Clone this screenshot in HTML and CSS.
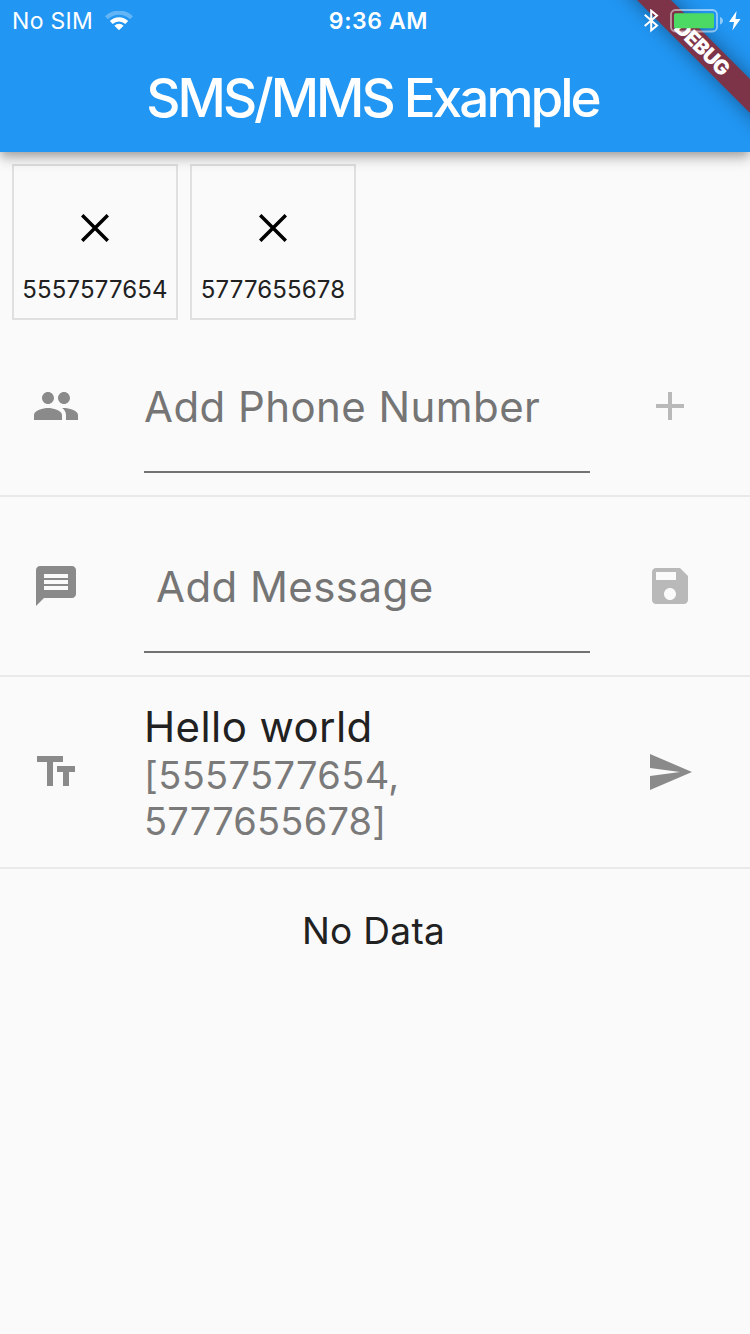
FILE: index.html
```html
<!DOCTYPE html>
<html lang="en">
<head>
<meta charset="utf-8">
<title>SMS/MMS Example</title>
<link rel="stylesheet" href="styles.css">
</head>
<body>
<header class="app-bar">
  <div class="ribbon-clip"><div class="ribbon"><span class="ribbon-text">DEBUG</span></div></div>
  <div class="status">
    <div class="status-left">
      <span class="carrier">No SIM</span>
      <svg class="wifi" width="28" height="20" viewBox="0 0 28 20">
        <path d="M0 5.300a19.8 19.8 0 0 1 28 0l-2.900 3a15.700 15.700 0 0 0-22.200 0z" fill="#fff" fill-opacity=".3"/>
        <path d="M4.800 10.100a13 13 0 0 1 18.400 0l-2.900 2.900a8.900 8.900 0 0 0-12.600 0z" fill="#fff"/>
        <path d="M9.400 14.700a6.500 6.500 0 0 1 9.200 0L14 19.200z" fill="#fff"/>
      </svg>
    </div>
    <span class="clock">9:36 AM</span>
    <div class="status-right">
      <svg width="16" height="24" viewBox="0 0 16 24" fill="none" stroke="#fff" stroke-width="2"><path d="M1.700 5.800 14 16.500 8.200 21.300V1.700L14 6.500 1.700 17.100"/></svg>
      <svg class="battery" width="54" height="24" viewBox="0 0 54 24">
        <rect x="1" y="1" width="46" height="21.5" rx="4.5" fill="none" stroke="#fff" stroke-opacity=".5" stroke-width="1.8"/>
        <rect x="4" y="4.250" width="40" height="15" rx="1.5" fill="#4cd964"/>
        <path d="M50 8c1.800.600 3 2 3 3.800S51.800 15 50 15.600z" fill="#fff" fill-opacity=".5"/>
      </svg>
      <svg class="bolt" width="12" height="20" viewBox="0 0 12 20"><path d="M7.600 0 0 11h5L3.400 19.500 11.500 8H6.500z" fill="#fff"/></svg>
    </div>
  </div>
  <h1 class="title"><span>SMS/MMS Example</span></h1>
</header>

<main>
  <section class="chips">
    <div class="chip">
      <svg width="28" height="28" viewBox="0 0 28 28"><path d="M1.200 1.200 26.800 26.800M26.800 1.200 1.200 26.800" stroke="#000" stroke-width="3.500"/></svg>
      <span class="chip-label">5557577654</span>
    </div>
    <div class="chip">
      <svg width="28" height="28" viewBox="0 0 28 28"><path d="M1.200 1.200 26.800 26.800M26.800 1.200 1.200 26.800" stroke="#000" stroke-width="3.500"/></svg>
      <span class="chip-label">5777655678</span>
    </div>
  </section>

  <section class="row">
    <svg class="icon lead" viewBox="0 0 24 24"><path d="M16 11c1.660 0 2.990-1.340 2.990-3S17.660 5 16 5s-3 1.340-3 3 1.340 3 3 3zm-8 0c1.660 0 2.990-1.340 2.990-3S9.660 5 8 5 5 6.340 5 8s1.340 3 3 3zm0 2c-2.330 0-7 1.170-7 3.500V19h14v-2.500C15 14.170 10.330 13 8 13zm8 0c-.290 0-.620.020-.970.050C16.190 13.890 17 15.020 17 16.500V19h6v-2.500c0-2.330-4.670-3.500-7-3.500z"/></svg>
    <div class="field"><span class="hint hint-phone">Add Phone Number</span></div>
    <svg class="icon trail off" viewBox="0 0 24 24"><path d="M19 13h-6v6h-2v-6H5v-2h6V5h2v6h6z"/></svg>
  </section>

  <section class="row">
    <svg class="icon lead" viewBox="0 0 24 24"><path d="M20 2H4c-1.100 0-1.990.900-1.990 2L2 22l4-4h14c1.100 0 2-.900 2-2V4c0-1.100-.900-2-2-2zm-2 12H6v-2h12v2zm0-3H6V9h12v2zm0-3H6V6h12v2z"/></svg>
    <div class="field"><span class="hint hint-message">Add Message</span></div>
    <svg class="icon trail off" viewBox="0 0 24 24"><path d="M17 3H5c-1.110 0-2 .900-2 2v14c0 1.100.890 2 2 2h14c1.100 0 2-.900 2-2V7l-4-4zm-5 16c-1.660 0-3-1.340-3-3s1.340-3 3-3 3 1.340 3 3-1.340 3-3 3zm3-10H5V5h10v4z"/></svg>
  </section>

  <section class="row row-tall">
    <svg class="icon lead" viewBox="0 0 24 24"><path d="M2.500 4v3h5v12h3V7h5V4h-13zm19 5h-9v3h3v7h3v-7h3V9z"/></svg>
    <div class="preview">
      <div class="message"><span>Hello world</span></div>
      <div class="people"><span class="p1">[5557577654,</span><br><span class="p2">5777655678]</span></div>
    </div>
    <svg class="icon trail" viewBox="0 0 24 24"><path d="M2.010 21 23 12 2.010 3 2 10l15 2-15 2z"/></svg>
  </section>

  <p class="empty"><span>No Data</span></p>
</main>
</body>
</html>
```
FILE: styles.css
```css
* { box-sizing: border-box; }
body {
  margin: 0;
  min-height: 1334px;
  background: #fafafa;
  color: #212121;
  font-family: Inter, "Liberation Sans", sans-serif;
  font-weight: 400;
}
svg { display: block; flex: none; }

.app-bar {
  position: relative;
  z-index: 1;
  height: 152px;
  background: #2196f3;
  color: #fff;
  box-shadow: 0 4px 8px -2px rgba(0,0,0,.2), 0 8px 10px 0 rgba(0,0,0,.14), 0 2px 20px 0 rgba(0,0,0,.12);
}
.ribbon-clip {
  position: absolute;
  top: 0;
  right: 0;
  width: 150px;
  height: 152px;
  overflow: hidden;
}
.ribbon {
  position: absolute;
  left: 1.5px;
  top: 35.5px;
  width: 200px;
  height: 24px;
  background: #7d3449;
  box-shadow: 0 0 20px rgba(0,0,0,.4);
  transform: rotate(45deg);
  text-align: center;
  line-height: 24px;
}
.ribbon-text { font-size: 20.4px; font-weight: 900; letter-spacing: -.6px; }

.status {
  position: relative;
  display: grid;
  grid-template-columns: 1fr auto 1fr;
  height: 41px;
  align-items: center;
  padding: 0 9px 0 12px;
  font-size: 23px;
}
.status-left, .status-right { display: flex; align-items: center; }
.status-left { gap: 12px; }
.carrier { letter-spacing: .3px; }
.clock { font-weight: 600; letter-spacing: .6px; padding-left: 4px; }
.status-right { justify-content: flex-end; }
.battery { margin-left: 11px; }
.bolt { margin-left: 5px; }

.title {
  margin: 0;
  height: 111px;
  padding-right: 5px;
  line-height: 114px;
  text-align: center;
  font-size: 53px;
  font-weight: 500;
  letter-spacing: -3px;
}

.chips { display: flex; gap: 12px; height: 165px; padding: 12px 12px 0; }
.chip {
  display: flex;
  flex-direction: column;
  align-items: center;
  width: 166px;
  height: 156px;
  padding-top: 48px;
  border: 2px solid #e0e0e0;
}
.chip-label { margin-top: 32px; font-size: 24px; line-height: 32px; letter-spacing: .15px; white-space: nowrap; }

.row {
  display: grid;
  grid-template-columns: 144px 446px 160px;
  align-items: center;
  height: 180px;
  border-bottom: 2px solid #e9e9e9;
}
.row-tall { height: 192px; }
.icon { width: 48px; height: 48px; fill: #8a8a8a; }
.icon.off { fill: #b9b9b9; }
.lead { margin-left: 32px; }
.trail { margin-left: 56px; }
.field {
  align-self: start;
  height: 156px;
  padding-top: 64px;
  border-bottom: 2px solid #727272;
  font-size: 42px;
  line-height: 52px;
  color: #757575;
  white-space: nowrap;
}
.hint { letter-spacing: .43px; }
.hint-message { margin-left: 12px; }
.preview { padding-top: 2px; }
.message { font-size: 42px; line-height: 50px; letter-spacing: .4px; }
.people { font-size: 38px; line-height: 46px; color: #7a7a7a; letter-spacing: .35px; }
.p2 { letter-spacing: .2px; }
.empty { margin: 38px 3px 0 0; font-size: 37px; line-height: 48px; letter-spacing: .3px; text-align: center; }
```
